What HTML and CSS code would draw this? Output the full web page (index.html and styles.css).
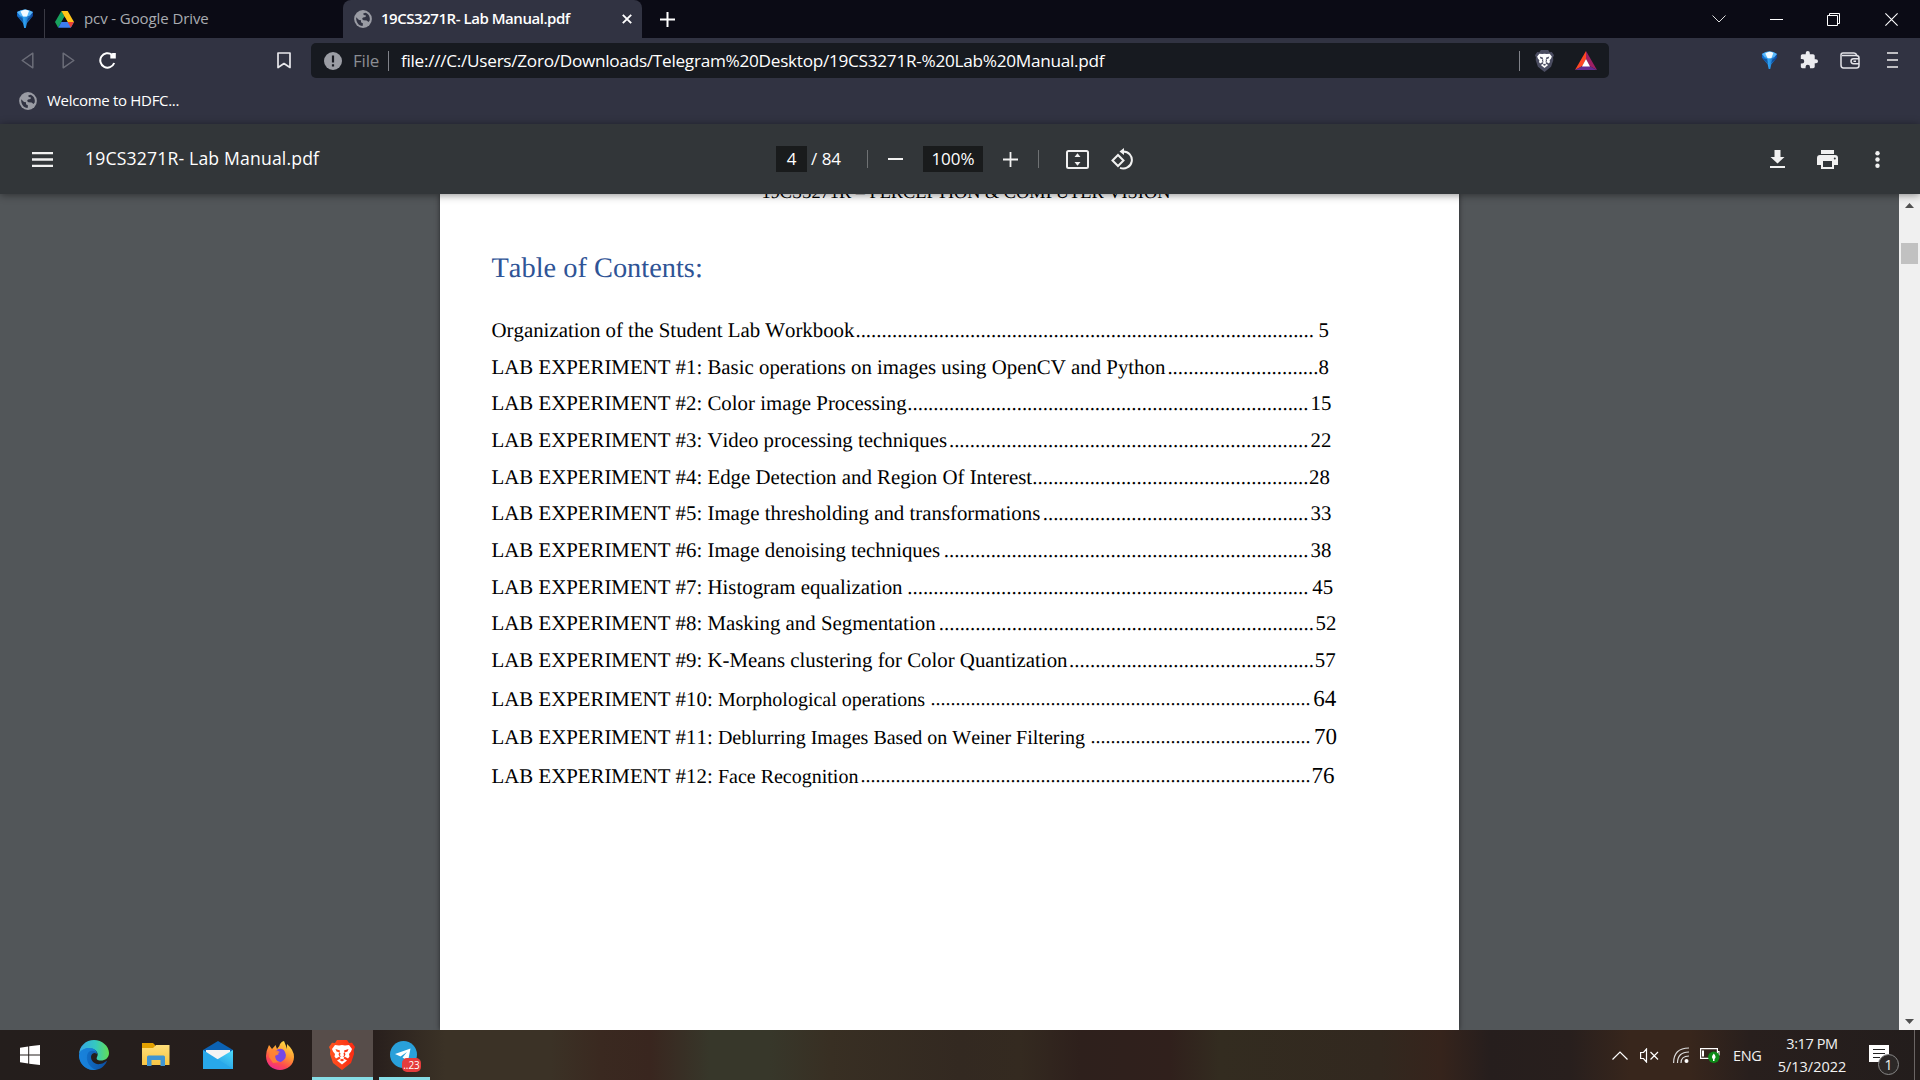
FILE: index.html
```html
<!DOCTYPE html>
<html lang="en">
<head>
<meta charset="utf-8">
<title>19CS3271R- Lab Manual.pdf</title>
<link rel="stylesheet" href="styles.css">
</head>
<body>
<svg class="defs" width="0" height="0" aria-hidden="true">
  <defs>
    <linearGradient id="gemFill" x1="0" x2="1"><stop offset="0" stop-color="#0b62c4"/><stop offset=".45" stop-color="#2fa4f5"/><stop offset="1" stop-color="#0a3f96"/></linearGradient>
    <linearGradient id="edgeTop" x1="0" x2="1"><stop offset="0" stop-color="#35a6e8"/><stop offset=".55" stop-color="#35c8c0"/><stop offset="1" stop-color="#62df55"/></linearGradient>
    <linearGradient id="edgeLow" x1="0" x2="1"><stop offset="0" stop-color="#1278d4"/><stop offset="1" stop-color="#0c4fa0"/></linearGradient>
    <linearGradient id="folder" x2="0" y2="1"><stop offset="0" stop-color="#ffdf79"/><stop offset="1" stop-color="#f7c544"/></linearGradient>
    <linearGradient id="mail" x1="0" y1="1" x2="1" y2="0"><stop offset="0" stop-color="#1682d8"/><stop offset="1" stop-color="#4cdcfc"/></linearGradient>
    <linearGradient id="fox" x1=".8" y1="0" x2=".3" y2="1"><stop offset="0" stop-color="#ffe548"/><stop offset=".45" stop-color="#ff9631"/><stop offset=".75" stop-color="#ff4a4f"/><stop offset="1" stop-color="#ec2a92"/></linearGradient>
    <linearGradient id="brave" x2="1"><stop offset="0" stop-color="#ff5420"/><stop offset="1" stop-color="#fb2a12"/></linearGradient>
    <symbol id="gem" viewBox="0 0 18 20">
      <path d="M1 3Q9-2 17 3V7L11 14 9.800 19H8.200L7 14 1 7Z" fill="url(#gemFill)"/>
      <path d="M1 3Q9-2 17 3L14 6.500 9 8 4 6.500Z" fill="#58b8fa"/>
      <path d="M4.500 2.500Q9-.5 13 2L11 7.500H7Z" fill="#f3fbff"/>
      <path d="M2 8 7.500 14 6.500 8.500ZM12 9 10.500 13.500 16 7.500Z" fill="#07387d" opacity=".6"/>
    </symbol>
    <symbol id="globe" viewBox="0 0 18 18">
      <circle cx="9" cy="9" r="8.900" fill="#9a9ca4"/>
      <path d="M2.200 7.200 5 10 7 10.300V12.300L9 13.500 8.600 15.900C4.500 15.700 1.800 12 2.200 7.200ZM11.500 2.700C14.800 4 16.400 7 15.700 10.600L14.500 12 12.600 10.400 9.500 10.300 8 9 9 7.500 11.500 7 12 5.500 9.700 5 9.200 3.500Z" fill="#313342"/>
    </symbol>
    <symbol id="lion" viewBox="0 0 26 30">
      <path d="M8 0H18L20 3 23 2.800 26 7 24.700 10 25 14 22 23 13 30 4 23 1 14 1.300 10 0 7 3 2.800 6 3Z"/>
      <path d="M6 5 10 5.500 13 5 16 5.500 20 5 23 9 22 11.500 20 14 20.500 16.500 19 18.500 15.500 16.500 14.500 18.500 18 20.500 13 24.500 8 20.500 11.500 18.500 10.500 16.500 7 18.500 5.500 16.500 6 14 4 11.500 3 9Z" fill="#fff"/>
      <path d="M6.500 9 11 10.500 10.500 12.500 7.500 11.500ZM19.500 9 15 10.500 15.500 12.500 18.500 11.500ZM10.200 12.500 11.500 13 11 15.500 12.500 16.800 10.500 16.500 9.500 14.500ZM15.800 12.500 14.500 13 15 15.500 13.500 16.800 15.500 16.500 16.500 14.500ZM10.500 20 13 18.800 15.500 20 13 21.500Z"/>
    </symbol>
  </defs>
</svg>

<div class="screen">
  <header class="tabs">
    <svg class="pin" width="18" height="20"><use href="#gem"/></svg>
    <div class="tab tab-drive">
      <svg width="19" height="17" viewBox="0 0 19 17"><path d="M6.400 0 0 11 3.200 16.700 9.600 5.600Z" fill="#18a15d"/><path d="M6.400 0H12.700L19 11H12.600Z" fill="#ffc61a"/><path d="M6.400 11H19L15.800 16.700H3.200Z" fill="#3d7df0"/><path d="M15.800 16.700 12.600 11H19Z" fill="#ea4335"/><path d="M9.500 5.800 12.600 11H6.500Z" fill="#0b0b15"/></svg>
      <span class="ui drive-title">pcv - Google Drive</span>
    </div>
    <div class="tab tab-active">
      <svg width="18" height="18"><use href="#globe"/></svg>
      <span class="ui active-title">19CS3271R- Lab Manual.pdf</span>
      <svg class="tab-close" width="10" height="10" viewBox="0 0 10 10"><path d="M.8.8 9.200 9.200M9.200.8.8 9.200" stroke="#fff" stroke-width="1.900"/></svg>
    </div>
    <svg class="new-tab" width="15" height="15" viewBox="0 0 15 15"><path d="M7.500 0V15M0 7.500H15" stroke="#fff" stroke-width="2"/></svg>
    <div class="window-buttons">
      <svg width="14" height="8" viewBox="0 0 14 8"><path d="M.5.5 7 7 13.500.5" fill="none" stroke="#ddd"/></svg>
      <svg width="13" height="1" viewBox="0 0 13 1"><path d="M0 .5H13" stroke="#fff"/></svg>
      <svg width="13" height="13" viewBox="0 0 13 13"><path d="M.5 2.500H10.500V12.500H.5ZM2.500 2.500V.5H12.500V10.500H10.500" fill="none" stroke="#fff"/></svg>
      <svg class="win-close" width="13" height="13" viewBox="0 0 13 13"><path d="M.4.4 12.600 12.600M12.600.4.4 12.600" stroke="#fff" stroke-width="1.100"/></svg>
    </div>
  </header>

  <div class="navbar">
    <svg class="nav-back" width="13" height="17" viewBox="0 0 13 17"><path d="M11.800 1.200V15.800L1.200 8.500Z" fill="none" stroke="#6b6d78" stroke-width="1.500" stroke-linejoin="round"/></svg>
    <svg class="nav-next" width="13" height="17" viewBox="0 0 13 17"><path d="M1.200 1.200V15.800L11.800 8.500Z" fill="none" stroke="#6b6d78" stroke-width="1.500" stroke-linejoin="round"/></svg>
    <svg class="nav-reload" width="18" height="17" viewBox="0 0 18 17"><path d="M15.200 11A7.200 7.200 0 1 1 13 2.800" fill="none" stroke="#fff" stroke-width="2"/><path d="M16.800 1V6.500H11.300V3L13.500 1Z" fill="#fff"/></svg>
    <svg class="nav-mark" width="14" height="17" viewBox="0 0 14 17"><path d="M1 1H13V15.500L7 11.500 1 15.500Z" fill="none" stroke="#e8e8ec" stroke-width="1.700" stroke-linejoin="round"/></svg>
    <div class="omnibox">
      <svg class="info" width="18" height="18" viewBox="0 0 18 18"><circle cx="9" cy="9" r="9" fill="#9b9da4"/><path d="M9 3.500V10.500M9 12.300V14.600" stroke="#191b22" stroke-width="2.200"/></svg>
      <span class="ui scheme">File</span>
      <i class="bar"></i>
      <span class="ui url">file:///C:/Users/Zoro/Downloads/Telegram%20Desktop/19CS3271R-%20Lab%20Manual.pdf</span>
      <i class="bar bar-right"></i>
      <svg class="shield" width="19" height="22" fill="#4b4d61"><use href="#lion"/></svg>
      <svg class="rewards" width="22" height="19" viewBox="0 0 22 19"><path d="M11 0V8L7.500 15 0 19Z" fill="#ff4724"/><path d="M11 0 22 19 14.500 15 11 8Z" fill="#9e1f63"/><path d="M0 19 7.500 15H14.500L22 19Z" fill="#662d91"/><path d="M11 8 15 15.500H7Z" fill="#fff"/></svg>
    </div>
    <div class="extensions">
      <svg width="17" height="19" viewBox="0 0 18 20"><use href="#gem"/></svg>
      <svg width="18" height="18" viewBox="1 1 22 22"><path d="M20.500 11H19V7c0-1.100-.9-2-2-2h-4V3.500a2.500 2.500 0 0 0-5 0V5H4c-1.100 0-2 .9-2 2v3.800h1.500a2.700 2.700 0 0 1 0 5.400H2V20c0 1.100.9 2 2 2h3.800v-1.500a2.700 2.700 0 0 1 5.400 0V22H17c1.100 0 2-.9 2-2v-4h1.500a2.500 2.500 0 0 0 0-5z" fill="#ececf0"/></svg>
      <svg width="20" height="17" viewBox="0 0 20 17"><path d="M1 13V3Q1 1 3 1H14Q16 1 17 3.500H2M16 3.500Q19 3.500 19 6V13.500Q19 16 16.500 16H3.500Q1 16 1 13M19 6.800H13.500Q11 6.800 11 9.200T13.500 11.700H19M13.500 9.200H16" fill="none" stroke="#e3e3e8" stroke-width="1.500"/></svg>
      <svg class="ext-menu" width="11" height="16" viewBox="0 0 11 16"><path d="M0 1H11M0 8H11M0 15H11" stroke="#eee" stroke-width="1.600"/></svg>
    </div>
  </div>

  <div class="bookmarks">
    <svg width="18" height="18"><use href="#globe"/></svg>
    <span class="ui bookmark-title">Welcome to HDFC...</span>
  </div>

  <div class="pdf-bar">
    <svg class="pdf-menu" width="21" height="15" viewBox="0 0 21 15"><path d="M0 1.200H21M0 7.500H21M0 13.800H21" stroke="#f1f1f1" stroke-width="2.300"/></svg>
    <span class="pdf-title">19CS3271R- Lab Manual.pdf</span>
    <span class="field page-field">4</span>
    <span class="page-total">/ 84</span>
    <i class="sep sep-1"></i>
    <svg class="minus" width="15" height="2"><path d="M0 1H15" stroke="#f1f1f1" stroke-width="2"/></svg>
    <span class="field zoom-field">100%</span>
    <svg class="plus" width="15" height="15"><path d="M7.500 0V15M0 7.500H15" stroke="#f1f1f1" stroke-width="1.800"/></svg>
    <i class="sep sep-2"></i>
    <svg class="fit" width="23" height="19" viewBox="0 0 23 19"><rect x="1" y="1" width="21" height="17" rx="1.500" fill="none" stroke="#f1f1f1" stroke-width="2"/><path d="M11.500 3.200 14.500 7H8.500ZM11.500 15.800 14.500 12H8.500Z" fill="#f1f1f1"/></svg>
    <svg class="rotate" width="23" height="22" viewBox="0 0 23 22"><path d="M1.500 12.500 7 7 12.500 12.500 7 18Z" fill="none" stroke="#f1f1f1" stroke-width="2"/><path d="M12 3.500A8.500 8.500 0 1 1 9 19.800" fill="none" stroke="#f1f1f1" stroke-width="2"/><path d="M13 0V7L8.500 3.500Z" fill="#f1f1f1"/></svg>
    <div class="pdf-actions">
      <svg width="15" height="18" viewBox="0 0 15 18"><path d="M4.500 0H10.500V7H14.500L7.500 13.500.5 7H4.500ZM0 16H15V18H0Z" fill="#f1f1f1"/></svg>
      <svg width="21" height="19" viewBox="0 0 21 19"><path d="M4 0H17V4H4ZM3 5H18Q21 5 21 8V15H17V19H4V15H0V8Q0 5 3 5ZM6 11V17H15V11ZM17.800 7.400A1 1 0 1 0 17.800 9.400 1 1 0 1 0 17.800 7.400Z" fill="#f1f1f1" fill-rule="evenodd"/></svg>
      <svg class="more" width="5" height="17" viewBox="0 0 5 17" fill="#f1f1f1"><circle cx="2.500" cy="2.300" r="2.200"/><circle cx="2.500" cy="8.500" r="2.200"/><circle cx="2.500" cy="14.700" r="2.200"/></svg>
    </div>
  </div>

  <main class="viewer">
    <article class="page">
      <div class="running-head">19CS3271R – PERCEPTION &amp; COMPUTER VISION</div>
      <h1>Table of Contents:</h1>
      <ol class="toc">
        <li><span class="entry stop-1"><b>Organization of the Student Lab Workbook</b><i>........................................................................................</i></span><em class="n0">5</em></li>
        <li><span class="entry stop-2"><b>LAB EXPERIMENT #1: Basic operations on images using OpenCV and Python</b><i>.............................</i></span><em class="n1">8</em></li>
        <li><span class="entry"><b>LAB EXPERIMENT #2: Color image Processing</b><i>.............................................................................</i></span><em>15</em></li>
        <li><span class="entry"><b>LAB EXPERIMENT #3: Video processing techniques</b><i>.....................................................................</i></span><em>22</em></li>
        <li><span class="entry"><b>LAB EXPERIMENT #4: Edge Detection and Region Of Interest</b><i>.....................................................</i></span><em class="n4">28</em></li>
        <li><span class="entry"><b>LAB EXPERIMENT #5: Image thresholding and transformations</b><i>...................................................</i></span><em>33</em></li>
        <li><span class="entry"><b>LAB EXPERIMENT #6: Image denoising techniques</b><i>......................................................................</i></span><em>38</em></li>
        <li><span class="entry"><b>LAB EXPERIMENT #7: Histogram equalization</b><i>.............................................................................</i></span><em class="n7">45</em></li>
        <li><span class="entry stop-1"><b>LAB EXPERIMENT #8: Masking and Segmentation</b><i>........................................................................</i></span><em class="n8">52</em></li>
        <li><span class="entry stop-1"><b>LAB EXPERIMENT #9: K-Means clustering for Color Quantization</b><i>...............................................</i></span><em class="n9">57</em></li>
        <li class="late"><span class="entry"><b>LAB EXPERIMENT #10: <span class="topic">Morphological operations</span></b><i>............................................................................</i></span><em class="n10">64</em></li>
        <li class="late"><span class="entry"><b>LAB EXPERIMENT #11: <span class="topic">Deblurring Images Based on Weiner Filtering</span></b><i>............................................</i></span><em class="n11">70</em></li>
        <li class="late"><span class="entry"><b>LAB EXPERIMENT #12: <span class="topic">Face Recognition</span></b><i>..........................................................................................</i></span><em class="n12">76</em></li>
      </ol>
    </article>
    <aside class="scrollbar">
      <svg width="9" height="5"><path d="M4.500 0 9 5H0Z" fill="#505050"/></svg>
      <i class="thumb"></i>
      <svg class="down" width="9" height="5"><path d="M0 0H9L4.500 5Z" fill="#505050"/></svg>
    </aside>
  </main>

  <footer class="taskbar">
    <div class="apps">
      <div class="app"><svg width="20" height="20" viewBox="0 0 20 20" fill="#fff"><path d="M0 2.700 8.200 1.500V9.500H0ZM9.200 1.300 20 0V9.500H9.200ZM0 10.500H8.200V18.500L0 17.300ZM9.200 10.500H20V20L9.200 18.700Z"/></svg></div>
      <div class="app"><svg width="30" height="30" viewBox="0 0 30 30"><path d="M0 15C0 6 7 0 15 0S30 6 30 13C30 18 26 20.500 22 20.500S17 19 18 17C20 14 18 9 11.500 9 5 9 0 12 0 15Z" fill="url(#edgeTop)"/><path d="M0 15C1 10 6 8 10 8 15 8 18 11 18 14 14 11 12 15 12 17 12 21 16 25 21 24 25 24 28 20 28 21 25 28 19 30 15 30 6 30 0 23 0 15Z" fill="url(#edgeLow)"/><path d="M9 13C6 18 9 27 17 30 6 31 0 23 0 15 1 10 6 8 10 8 14 8 17 10 18 13 15 10 11 10 9 13Z" fill="#1b86de" opacity=".75"/></svg></div>
      <div class="app"><svg width="28" height="24" viewBox="0 0 28 24"><path d="M0 0H11L13 2V8H0Z" fill="#e3a100"/><path d="M0 5H11L14 2H27.500V22H0Z" fill="url(#folder)"/><path d="M5 23V14Q5 12.500 6.500 12.500H21.500Q23 12.500 23 14V23H18.500V17H9.500V23Z" fill="#3f95d2"/></svg></div>
      <div class="app"><svg width="30" height="28" viewBox="0 0 30 28"><path d="M0 9 15 0 30 9V20H0Z" fill="#0b62b4"/><path d="M3 9H27V15L15 20 3 15Z" fill="#f4f4f4"/><path d="M15 18 30 9V28H0Z" fill="url(#mail)"/><path d="M0 9 30 28H0Z" fill="#28a8ea"/></svg></div>
      <div class="app"><svg width="28" height="29" viewBox="0 0 28 29"><path d="M3 4 6 8Q9 5 9.500 4L11 8Q14 5 14 3 16 0 18 0L20 5 21 8 21 3Q28 9 28 16C28 24 21 29 14 29S0 24 0 15Q0 10 3 4Z" fill="url(#fox)"/><path d="M9 10Q16 5 19 11T15 21Q9 21 9 15L13 13Z" fill="#7648e6"/><path d="M4 9Q8 7 14 11L9 14Q9 20 14 21L7 22 3 16Z" fill="#ff8534" opacity=".85"/></svg></div>
      <div class="app app-current"><svg width="26" height="30" fill="url(#brave)"><use href="#lion"/></svg></div>
      <div class="app app-open"><svg width="27" height="27" viewBox="0 0 27 27"><circle cx="13.500" cy="13.500" r="13.500" fill="#29a0da"/><path d="M5 13 20.500 7.500 18 20 12.500 16.500 17 11 10.500 15.500Z" fill="#fff"/></svg><span class="badge">..23</span></div>
    </div>
    <div class="tray">
      <svg class="t-up" width="16" height="9"><path d="M.5 8.500 8 1 15.500 8.500" fill="none" stroke="#fff" stroke-width="1.200"/></svg>
      <svg class="t-sound" width="19" height="15" viewBox="0 0 19 15"><path d="M.6 4.500H3.500L6.500 1V14L3.500 10.500H.6ZM10.500 4 18 11.500M18 4 10.500 11.500" fill="none" stroke="#fff" stroke-width="1.200"/></svg>
      <svg class="t-wifi" width="17" height="16" viewBox="0 0 17 16"><path d="M.6 16Q.6 1 16 1M4.500 16Q4.500 5 16 5M8 16Q8 9 16 9" fill="none" stroke="#ddd" stroke-width="1.200"/><circle cx="13.500" cy="14" r="2" fill="#fff"/></svg>
      <svg class="t-power" width="20" height="16" viewBox="0 0 20 16"><path d="M.6 1.600H17.400V11.400H.6ZM18 4.500H19V8.500" fill="none" stroke="#fff" stroke-width="1.200"/><path d="M3 3.500V9.500" stroke="#fff" stroke-width="2"/><circle cx="13.800" cy="10.200" r="5.700" fill="#0c8a16"/><path d="M13.800 6.500Q17 10 14.500 12V14H13V12Q10.600 10 13.800 6.500Z" fill="#fff"/></svg>
      <span class="ui lang">ENG</span>
      <div class="ui clock"><span class="time">3:17 PM</span><span class="date">5/13/2022</span></div>
      <div class="notice"><svg width="20" height="20" viewBox="0 0 20 20"><path d="M0 0H20V17H13L10 20V17H0Z" fill="#fff"/><path d="M4 4.500H16M4 8.500H16M4 12.500H11" stroke="#222" stroke-width="1.200"/></svg><span class="ui count">1</span></div>
      <i class="desktop-edge"></i>
    </div>
  </footer>
</div>
</body>
</html>
```
FILE: styles.css
```css
* { box-sizing: border-box; }
body { margin: 0; background: #525659; }
svg { display: block; flex: none; }
i, em { font-style: normal; }
b { font-weight: 400; }
.defs { position: absolute; }
.ui { font-family: "Open Sans", "Noto Sans", sans-serif; white-space: nowrap; }
.screen { width: 1920px; height: 1080px; display: flex; flex-direction: column; overflow: hidden; }

/* Tab strip */
.tabs { height: 38px; flex: none; background: #0b0b15; display: flex; align-items: center; color: #fff; }
.pin { margin-left: 16px; }
.tab { display: flex; align-items: center; }
.tab-drive { width: 299px; height: 29px; margin: 9px 0 0 10px; padding: 0 0 9px 10px; border-left: 1px solid #3a3a44; }
.drive-title { margin: 0 0 2px 10px; font-size: 15px; letter-spacing: -0.1px; color: #a9abb1; }
.tab-active { width: 299px; height: 38px; padding-left: 11px; background: #313342; border-radius: 8px 8px 0 0; }
.active-title { margin: 0 0 2px 9px; width: 230px; font-size: 15px; font-weight: 600; letter-spacing: -0.46px; }
.tab-close { margin-left: 11px; }
.new-tab { margin-left: 18px; }
.window-buttons { margin: 0 22px 0 auto; display: flex; align-items: center; gap: 44px; }
.win-close { margin-left: 1px; }

/* Address row */
.navbar { height: 44px; flex: none; padding: 0; background: #313342; display: flex; align-items: center; }
.nav-back { margin-left: 21px; }
.nav-next { margin-left: 28px; }
.nav-reload { margin-left: 24px; }
.nav-mark { margin-left: 160px; }
.omnibox { width: 1298px; height: 35px; margin-left: 20px; margin-top: 1px; background: #171a20; border-radius: 5px; display: flex; align-items: center; }
.info { margin-left: 13px; }
.scheme { width: 27px; margin-left: 11px; font-size: 17px; letter-spacing: -0.2px; color: #8b8d93; }
.bar { width: 1px; height: 20px; margin: 0 12px 0 8px; background: #808289; }
.url { width: 704px; font-size: 17.2px; letter-spacing: -0.28px; color: #fff; }
.bar-right { margin: 0 15px 0 auto; }
.rewards { margin: 0 12px 0 21px; }
.extensions { margin: 0 22px 0 auto; display: flex; align-items: center; gap: 22px; }
.ext-menu { margin-left: 5px; }

.bookmarks { height: 42px; flex: none; padding: 0 0 4px 19px; background: #313342; display: flex; align-items: center; }
.bookmark-title { margin: 0 0 2px 10px; font-size: 15px; letter-spacing: -0.31px; color: #fff; }

/* PDF controls */
.pdf-bar { height: 70px; flex: none; background: #323639; color: #fff; display: flex; align-items: center; position: relative; z-index: 2; box-shadow: 0 1px 8px rgba(0,0,0,.45); font-family: "Open Sans", "Noto Sans", sans-serif; font-size: 17px; white-space: nowrap; }
.pdf-menu { margin-left: 32px; }
.pdf-title { width: 691px; margin: 0 0 2px 32px; font-size: 17.6px; letter-spacing: 0.17px; }
.field { height: 26px; background: #191b1c; text-align: center; line-height: 26px; font-size: 17px; }
.page-field { width: 31px; }
.page-total { width: 37px; margin: 0 0 2px 4px; }
.sep { width: 1px; height: 18px; background: #6f7274; }
.sep-1 { margin-left: 19px; }
.minus { margin-left: 20px; }
.zoom-field { width: 60px; margin-left: 20px; }
.plus { margin-left: 20px; }
.sep-2 { margin-left: 20px; }
.fit { margin-left: 27px; }
.rotate { margin-left: 22px; }
.pdf-actions { margin: 0 40px 0 auto; display: flex; align-items: center; gap: 32px; }
.more { margin-left: 5px; }

/* Document */
.viewer { height: 836px; flex: none; background: #525659; display: flex; }
.page { width: 1019px; height: 836px; margin-left: 440px; padding-left: 51.500px; background: #fff; overflow: hidden; color: #000; font-family: "Liberation Serif", "Times New Roman", serif; font-kerning: none; text-rendering: geometricPrecision; white-space: nowrap; box-shadow: 0 0 5px rgba(0,0,0,.55); }
.running-head { margin: -12px 0 0 270px; font-size: 18.33px; line-height: 20px; }
h1 { margin: 49px 0 0; font-size: 28.4px; font-weight: 400; line-height: 36px; color: #2f5496; }
.toc { margin: 25px 0 0; padding: 0; list-style: none; font-size: 20.85px; line-height: 36.67px; }
.toc li { height: 36.67px; display: flex; align-items: baseline; }
.entry { width: 817px; display: flex; justify-content: space-between; }
.stop-1 { width: 822.5px; }
.stop-2 { width: 827px; }
.toc em { margin-left: 2px; }
.toc .n0 { margin-left: 4.5px; }
.toc .n1 { margin-left: 0; }
.toc .n4 { margin-left: .5px; }
.toc .n7 { margin-left: 3.8px; }
.toc .n8 { margin-left: 1.5px; }
.toc .n9 { margin-left: .8px; }
.toc .late { height: 38.5px; line-height: 41.5px; }
.late .entry { width: 819px; }
.late i, .topic { font-size: 20px; }
.late em { font-size: 23px; line-height: 1; }
.toc .n10 { margin-left: 2.7px; }
.toc .n11 { margin-left: 3.5px; }
.toc .n12 { margin-left: 1px; }
.scrollbar { width: 21px; margin-left: auto; padding: 9px 0 6px; background: #f0f0f0; display: flex; flex-direction: column; align-items: center; }
.thumb { width: 17px; height: 21px; margin-top: 35px; background: #c1c1c1; }
.down { margin-top: auto; }

/* Taskbar */
.taskbar { height: 50px; flex: none; display: flex; background: linear-gradient(90deg, #241e1c 0, #271e1c 370px, #3b3226 445px, #3b3226 550px, #3a2920 600px, #39261f 650px, #37372a 710px, #37372a 770px, #382f23 830px, #332921 960px, #342a20 1020px, #2e201c 1080px, #30201c 1170px, #332c20 1220px, #32281f 1380px, #36241c 1440px, #261e1d 1490px, #281f1d 1570px, #38261c 1630px, #38261c 1690px, #281f1d 1750px, #231d1c 1920px); color: #f2f2f2; }
.apps { display: flex; }
.app { width: 62px; height: 50px; display: flex; align-items: center; justify-content: center; }
.app:first-child { width: 60px; }
.app:nth-child(2) { width: 68px; }
.app:nth-child(3) { width: 56px; }
.app:nth-child(4) { width: 68px; }
.app:nth-child(5) { width: 56px; margin-right: 4px; }
.app-current { width: 61px; background: #574d4a; border-bottom: 3px solid #86dde6; padding: 3px 2px 0 0; }
.app-open { position: relative; width: 51px; margin-left: 6px; padding: 2px 2px 0 0; border-bottom: 3px solid #86dde6; }
.badge { position: absolute; left: 23px; top: 28px; width: 19px; height: 14px; border-radius: 5px; background: #e53c3c; color: #fff; font: 10px/14px "Open Sans", sans-serif; text-align: center; }
.tray { margin-left: auto; display: flex; align-items: center; }
.t-sound { margin-left: 12px; }
.t-wifi { margin-left: 14px; }
.t-power { margin-left: 10px; }
.lang { width: 29px; margin-left: 13px; font-size: 14.5px; letter-spacing: -0.4px; }
.clock { width: 68px; margin-left: 16px; display: flex; flex-direction: column; align-items: center; font-size: 14.5px; line-height: 23px; letter-spacing: -0.4px; }
.date { letter-spacing: 0; }
.notice { position: relative; width: 30px; height: 20px; margin-left: 23px; }
.count { position: absolute; left: 9px; top: 9px; width: 21px; height: 21px; border: 1px solid #888; border-radius: 50%; background: #2c2827; font-size: 14px; line-height: 19px; text-align: center; }
.desktop-edge { width: 1px; height: 50px; margin: 0 5px 0 15px; background: #6a6564; }
```
